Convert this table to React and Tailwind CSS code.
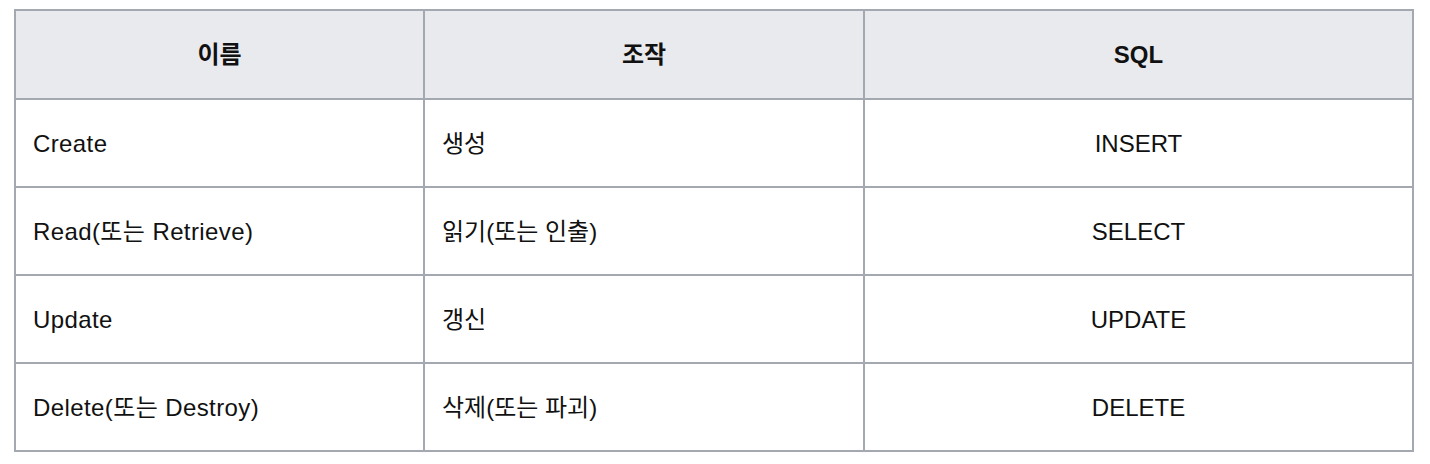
import React from 'react';

const rows = [
  { name: 'Create', op: '생성', sql: 'INSERT' },
  { name: 'Read(또는 Retrieve)', op: '읽기(또는 인출)', sql: 'SELECT' },
  { name: 'Update', op: '갱신', sql: 'UPDATE' },
  { name: 'Delete(또는 Destroy)', op: '삭제(또는 파괴)', sql: 'DELETE' },
];

const App = () => {
  return (
    <div className="w-[1430px] h-[464px] bg-white pt-[9px] pl-[14px] font-['Liberation_Sans','Noto_Sans_CJK_KR',sans-serif] text-[24px] text-[#111]">
      <div className="w-[1400px] border-2 border-[#a4a8b0] grid grid-cols-[409px_440px_547px]">
        {/* Header */}
        <div className="h-[89px] pt-[1px] bg-[#e9eaee] border-r-2 border-b-2 border-[#a4a8b0] flex items-center justify-center font-bold">이름</div>
        <div className="h-[89px] pt-[1px] bg-[#e9eaee] border-r-2 border-b-2 border-[#a4a8b0] flex items-center justify-center font-bold">조작</div>
        <div className="h-[89px] pt-[1px] bg-[#e9eaee] border-b-2 border-[#a4a8b0] flex items-center justify-center font-bold">SQL</div>

        {rows.map((row, i) => {
          const last = i === rows.length - 1;
          return (
            <React.Fragment key={row.sql}>
              <div className={last ? 'h-[86px] pt-[2px] border-r-2 border-[#a4a8b0] flex items-center pl-[17px] tracking-[0.4px]' : 'h-[88px] pt-[2px] border-r-2 border-b-2 border-[#a4a8b0] flex items-center pl-[17px] tracking-[0.4px]'}>
                {row.name}
              </div>
              <div className={last ? 'h-[86px] pt-[2px] border-r-2 border-[#a4a8b0] flex items-center pl-[17px]' : 'h-[88px] pt-[2px] border-r-2 border-b-2 border-[#a4a8b0] flex items-center pl-[17px]'}>
                {row.op}
              </div>
              <div className={last ? 'h-[86px] pt-[2px] flex items-center justify-center' : 'h-[88px] pt-[2px] border-b-2 border-[#a4a8b0] flex items-center justify-center'}>
                {row.sql}
              </div>
            </React.Fragment>
          );
        })}
      </div>
    </div>
  );
};

export default App;
